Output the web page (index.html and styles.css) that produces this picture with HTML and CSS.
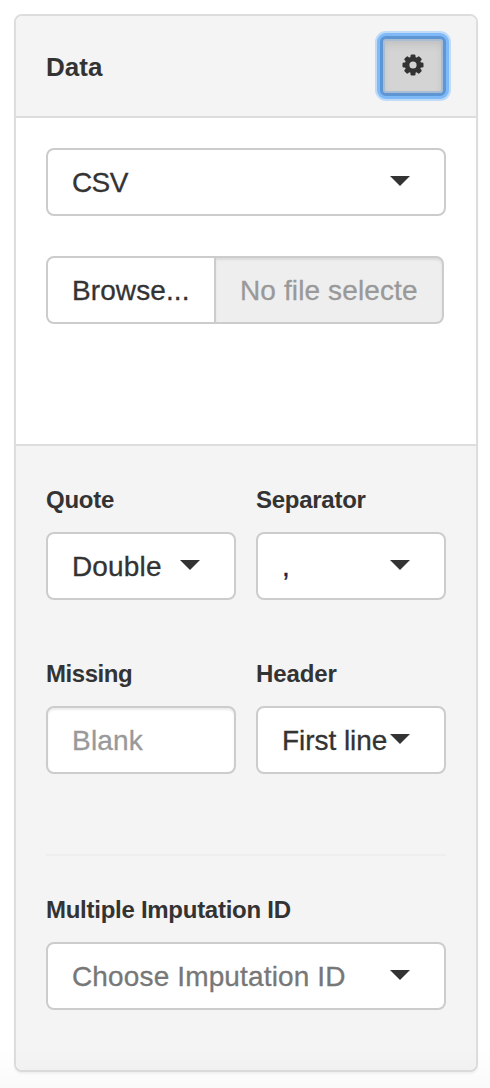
FILE: index.html
```html
<!DOCTYPE html>
<html lang="en">
<head>
<meta charset="utf-8">
<title>Data</title>
<link rel="stylesheet" href="styles.css">
</head>
<body>
<section class="panel">
  <header class="panel-header">
    <h1 class="panel-title">Data</h1>
    <button class="settings" type="button" aria-label="Settings">
      <svg class="gear" viewBox="-11 -11 22 22"><g fill="#333"><g id="teeth"><rect x="-2.5" y="-10.5" width="5" height="21" rx="1.2"/><rect x="-10.5" y="-2.5" width="21" height="5" rx="1.2"/></g><use href="#teeth" transform="rotate(45)"/><circle r="8.3"/></g><circle r="3.6" fill="#d4d4d4"/></svg>
    </button>
  </header>
  <div class="panel-body">
    <div class="control select"><span class="t-csv">CSV</span><i class="caret"></i></div>
    <div class="file">
      <div class="browse"><span class="t-browse">Browse...</span></div>
      <div class="filename"><span class="t-file">No file selected</span></div>
    </div>
  </div>
  <div class="panel-footer">
    <div class="fields">
      <div class="field">
        <div class="label">Quote</div>
        <div class="control select"><span class="t-double">Double</span><i class="caret"></i></div>
      </div>
      <div class="field">
        <div class="label">Separator</div>
        <div class="control select"><span class="comma">,</span><i class="caret"></i></div>
      </div>
      <div class="field">
        <div class="label t-missing">Missing</div>
        <div class="control input"><span class="t-blank">Blank</span></div>
      </div>
      <div class="field">
        <div class="label t-header">Header</div>
        <div class="control select"><span class="t-first">First line</span><i class="caret"></i></div>
      </div>
    </div>
    <hr class="rule">
    <div class="field">
      <div class="label">Multiple Imputation ID</div>
      <div class="control select"><span class="muted t-choose">Choose Imputation ID</span><i class="caret"></i></div>
    </div>
  </div>
</section>
<div class="fade"></div>
</body>
</html>
```
FILE: styles.css
```css
* { box-sizing: border-box; }
body {
  margin: 0;
  padding: 14px 12px 0 14px;
  height: 1088px;
  overflow: hidden;
  background: #fff;
  color: #333;
  font: 28px/40px "Liberation Sans", Arial, sans-serif;
}
.panel {
  height: 1058px;
  border: 2px solid #ddd;
  border-radius: 8px;
  background: #fff;
  box-shadow: 0 2px 2px rgba(0,0,0,.05);
  overflow: hidden;
}
.panel-header {
  display: flex;
  align-items: center;
  justify-content: space-between;
  height: 102px;
  padding: 0 30px;
  border-bottom: 2px solid #ddd;
  background: #f4f4f4;
}
.panel-title { margin: 0; padding-top: 2px; font-size: 26px; line-height: 40px; font-weight: bold; letter-spacing: .05px; }
.settings {
  display: flex;
  align-items: center;
  justify-content: center;
  width: 66px;
  height: 60px;
  padding: 0 0 2px;
  border: 3px solid #5d96d2;
  border-radius: 6px;
  background: #d4d4d4;
  box-shadow: 0 0 0 3px #7fb9f8, 0 0 0 5px #c0dbf7, inset 0 0 0 2px #a8bdd3, inset 0 5px 8px rgba(0,0,0,.1);
}
.gear { width: 22px; height: 22px; }
.panel-body { height: 326px; padding: 30px; }
.control {
  display: flex;
  align-items: center;
  height: 68px;
  padding: 0 24px;
  border: 2px solid #ccc;
  border-radius: 8px;
  background: #fff;
  white-space: nowrap;
}
.control span, .file span { padding-top: 1px; -webkit-text-stroke: .3px currentColor; }
.select { justify-content: space-between; padding-right: 34px; }
.select span { width: 0; flex: 1; }
.caret {
  width: 20px;
  height: 10px;
  margin-bottom: 2px;
  background: #333;
  clip-path: polygon(0 0, 100% 0, 50% 100%);
}
.input, .filename { color: #999; box-shadow: inset 0 2px 2px rgba(0,0,0,.075); }
.muted { color: #777; }
.comma { color: #224; }
.t-csv { letter-spacing: -.6px; }
.t-browse { letter-spacing: .1px; }
.t-file { letter-spacing: .12px; }
.t-double { letter-spacing: .15px; }
.t-blank { letter-spacing: .2px; }
.t-first { letter-spacing: -.05px; }
.t-choose { letter-spacing: .14px; }
.file { display: flex; width: 398px; height: 68px; margin-top: 40px; }
.browse, .filename { display: flex; align-items: center; border: 2px solid #ccc; padding: 0 24px; white-space: nowrap; }
.browse { width: 170px; border-radius: 8px 0 0 8px; }
.filename { width: 228px; border-left: 0; border-radius: 0 8px 8px 0; background: #eee; }
.filename span { width: 178px; overflow: hidden; }
.panel-footer { height: 626px; padding: 34px 30px 0; border-top: 2px solid #ddd; background: #f4f4f4; }
.fields { display: grid; grid-template-columns: 190px 190px; gap: 54px 20px; }
.label { height: 40px; margin-bottom: 12px; font-size: 24px; font-weight: bold; letter-spacing: -.27px; white-space: nowrap; }
.t-missing { letter-spacing: -.45px; }
.t-header { letter-spacing: -.1px; }
.rule { height: 2px; margin: 80px 0 34px; border: 0; background: #eee; }
.fade {
  position: fixed;
  inset: auto 0 0;
  height: 42px;
  background: linear-gradient(transparent, rgba(0,0,0,.02));
  pointer-events: none;
}
```
